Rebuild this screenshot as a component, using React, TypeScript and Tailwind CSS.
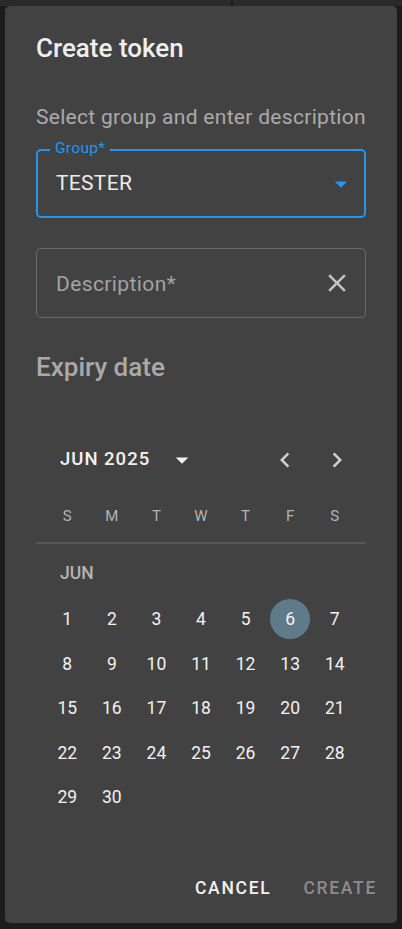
import React from "react";

const font = { fontFamily: "Roboto, 'Noto Sans', sans-serif" };

function ArrowDrop({ className }: { className?: string }) {
  return (
    <svg viewBox="0 0 24 24" className={className} fill="currentColor">
      <path d="M7 10l5 5 5-5z" />
    </svg>
  );
}

function Clear({ className }: { className?: string }) {
  return (
    <svg viewBox="0 0 24 24" className={className} fill="currentColor">
      <path d="M19 6.41L17.59 5 12 10.59 6.41 5 5 6.41 10.59 12 5 17.59 6.41 19 12 13.41 17.59 19 19 17.59 13.41 12z" />
    </svg>
  );
}

function ChevLeft({ className }: { className?: string }) {
  return (
    <svg viewBox="0 0 24 24" className={className} fill="currentColor">
      <path d="M15.41 7.41L14 6l-6 6 6 6 1.41-1.41L10.83 12z" />
    </svg>
  );
}

function ChevRight({ className }: { className?: string }) {
  return (
    <svg viewBox="0 0 24 24" className={className} fill="currentColor">
      <path d="M10 6L8.59 7.41 13.17 12l-4.58 4.59L10 18l6-6z" />
    </svg>
  );
}

const days: number[] = [];
for (let i = 1; i <= 30; i++) days.push(i);

export default function App() {
  return (
    <div className="w-[402px] h-[929px] bg-[#1c1c1c] relative overflow-hidden" style={font}>
      <div className="h-[6px] w-full bg-[#2a2a2a] flex">
        <div className="w-[231px] h-full" />
        <div className="w-[2px] h-full bg-[#1c1c1c]" />
      </div>
      <div className="ml-[5px] w-[392px] h-[917px] bg-[#424242] rounded-[5px] flex flex-col">
        <div className="mt-[22px] px-[31px] h-[40px] leading-[40px] text-[26px] font-medium text-[#efefef]">
          Create token
        </div>
        <div className="mt-[34px] px-[31px] h-[30px] leading-[30px] text-[21px] text-[#ababab] tracking-[0.3px]">
          Select group and enter description
        </div>
        <div className="mx-[31px] mt-[17px] h-[69px] relative border-2 border-[#2196f3] rounded-[5px] flex items-center pl-[18px] pr-[8px]">
          <span className="absolute left-[12px] top-[-10px] px-[5px] bg-[#424242] text-[15.5px] leading-[15px] text-[#2196f3] tracking-[0.3px]">
            Group*
          </span>
          <span className="flex-1 text-[21px] text-[#ececec] tracking-[0.3px]">TESTER</span>
          <ArrowDrop className="w-[30px] h-[30px] text-[#2196f3]" />
        </div>
        <div className="mx-[31px] mt-[30px] h-[70px] border border-[#6a6a6a] rounded-[5px] flex items-center pl-[19px] pr-[13px]">
          <span className="flex-1 pt-[3px] text-[21px] text-[#a3a3a3] tracking-[0.4px]">Description*</span>
          <Clear className="w-[30px] h-[30px] text-[#c4c4c4]" />
        </div>
        <div className="mt-[29px] px-[31px] h-[40px] leading-[40px] text-[26px] font-medium text-[#a9a9a9]">
          Expiry date
        </div>
        <div className="mt-[53px] h-[40px] flex items-center pl-[55px]">
          <span className="text-[18.5px] font-medium text-[#f2f2f2] tracking-[1px]">JUN 2025</span>
          <ArrowDrop className="ml-[17px] w-[30px] h-[30px] text-[#f2f2f2]" />
          <div className="flex-1" />
          <ChevLeft className="w-[30px] h-[30px] text-[#d0d0d0]" />
          <ChevRight className="ml-[22px] mr-[45px] w-[30px] h-[30px] text-[#d0d0d0]" />
        </div>
        <div className="mt-[21px] mx-[40px] h-[30px] grid grid-cols-7 items-center text-center text-[15px] text-[#b4b4b4]">
          {["S", "M", "T", "W", "T", "F", "S"].map((d, i) => (
            <span key={i}>{d}</span>
          ))}
        </div>
        <div className="mt-[11px] mx-[31px] h-[2px] bg-[#575757]" />
        <div className="mt-[14px] h-[30px] leading-[30px] pl-[55px] text-[17.5px] font-medium text-[#b4b4b4]">
          JUN
        </div>
        <div className="mt-[9px] mx-[40px] grid grid-cols-7 auto-rows-[44.5px] text-[17.5px] text-[#f2f2f2]">
          {days.map((d, i) => (
            <div key={i} className="flex items-center justify-center">
              {d === 6 ? (
                <span className="w-[40px] h-[40px] rounded-full bg-[#5f7b8a] flex items-center justify-center">
                  {d}
                </span>
              ) : (
                <span>{d}</span>
              )}
            </div>
          ))}
        </div>
        <div className="flex-1" />
        <div className="h-[40px] mb-[15px] flex items-center justify-end pr-[20px] gap-[32px] text-[17.5px] font-medium tracking-[1.7px]">
          <span className="text-[#f2f2f2]">CANCEL</span>
          <span className="text-[#8c8c8c]">CREATE</span>
        </div>
      </div>
    </div>
  );
}
